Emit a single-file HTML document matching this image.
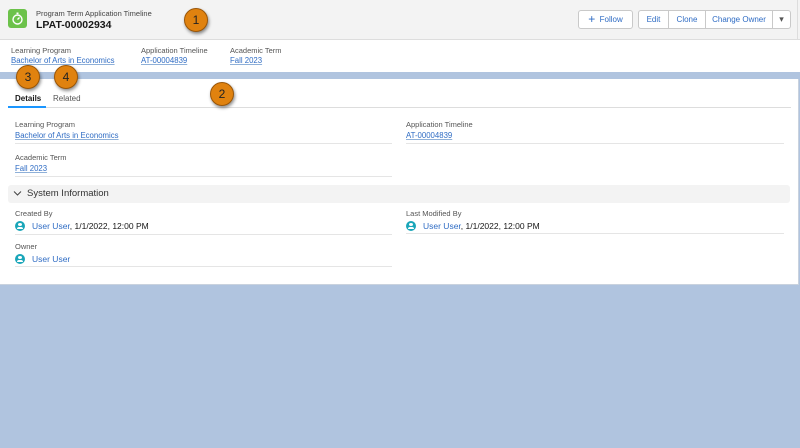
<!DOCTYPE html>
<html><head><meta charset="utf-8"><style>
*{box-sizing:border-box;margin:0;padding:0}
body{width:800px;height:448px;background:#b0c4df;font-family:"Liberation Sans",sans-serif;position:relative;overflow:hidden;color:#181818}
.a{position:absolute}
.lbl{font-size:7.5px;color:#555}
.lnk{font-size:7.8px;color:#2f6cc4;text-decoration:underline;text-decoration-color:#8fb0d8}
.blu{color:#2f6cc4}
.line{position:absolute;height:1px;background:#e5e5e5}
.badge{position:absolute;width:24px;height:24px;border-radius:50%;background:#e0820f;border:1px solid #9a5608;box-shadow:1px 2px 3px rgba(0,0,0,.45);font-size:12px;color:#222;text-align:center;line-height:22px}
.btn{position:absolute;top:10px;height:19px;border:1px solid #c9c9c9;background:#fff;font-size:8px;color:#2f6cc4;text-align:center;line-height:17px}
.av{display:inline-block;width:10px;height:10px;border-radius:50%;background:#1aa6b9;vertical-align:-2px;margin-right:7px;position:relative}
.av:after{content:"";position:absolute;left:3px;top:2px;width:4px;height:3px;border-radius:50%;background:#fff}
.av:before{content:"";position:absolute;left:2px;top:5.5px;width:6px;height:2.5px;border-radius:3px 3px 0 0;background:#fff}
</style></head><body>
<div class="a" style="left:0;top:0;width:800px;height:40px;background:#f3f3f3;border-bottom:1px solid #ddd"></div>
<div class="a" style="left:0;top:40px;width:800px;height:32px;background:#fff"></div>
<div class="a" style="left:0;top:79px;width:799px;height:206px;background:#fff;border-bottom:1px solid #c9d2de;border-right:1px solid #c9d2de"></div>
<div class="a" style="left:797px;top:0;width:1px;height:40px;background:#ddd"></div>

<div class="a" style="left:8px;top:9px;width:19px;height:19px;background:#6cc24a;border-radius:3px">
<svg width="19" height="19" viewBox="0 0 19 19"><circle cx="9.5" cy="10.5" r="4.5" fill="none" stroke="#fff" stroke-width="1.4"/><rect x="8.5" y="3.5" width="2" height="1.6" fill="#fff"/><path d="M9.5 10.5 L11.5 8.5" stroke="#fff" stroke-width="1.3"/></svg></div>
<div class="a" style="left:36px;top:9px;font-size:7.5px;color:#444">Program Term Application Timeline</div>
<div class="a" style="left:36px;top:19px;font-size:10.5px;font-weight:bold">LPAT-00002934</div>

<div class="btn" style="left:578px;width:55px;border-radius:3px"><span style="font-size:12px;vertical-align:-1px">+</span>&nbsp; Follow</div>
<div class="btn" style="left:638px;width:31px;border-radius:3px 0 0 3px">Edit</div>
<div class="btn" style="left:668px;width:38px">Clone</div>
<div class="btn" style="left:705px;width:68px">Change Owner</div>
<div class="btn" style="left:772px;width:19px;border-radius:0 3px 3px 0;color:#555;font-size:9px">▾</div>

<div class="a lbl" style="left:11px;top:46px">Learning Program</div>
<div class="a lnk" style="left:11px;top:56px">Bachelor of Arts in Economics</div>
<div class="a lbl" style="left:141px;top:46px">Application Timeline</div>
<div class="a lnk" style="left:141px;top:56px">AT-00004839</div>
<div class="a lbl" style="left:230px;top:46px">Academic Term</div>
<div class="a lnk" style="left:230px;top:56px">Fall 2023</div>

<div class="a" style="left:15px;top:94px;font-size:8px;font-weight:bold">Details</div>
<div class="a" style="left:53px;top:94px;font-size:8px;color:#555">Related</div>
<div class="line" style="left:8px;top:107px;width:783px;background:#ddd"></div>
<div class="a" style="left:8px;top:106px;width:38px;height:2px;background:#1b96ff"></div>

<div class="a lbl" style="left:15px;top:120px">Learning Program</div>
<div class="a lnk" style="left:15px;top:131px">Bachelor of Arts in Economics</div>
<div class="line" style="left:15px;top:143px;width:377px"></div>
<div class="a lbl" style="left:406px;top:120px">Application Timeline</div>
<div class="a lnk" style="left:406px;top:131px">AT-00004839</div>
<div class="line" style="left:406px;top:143px;width:378px"></div>
<div class="a lbl" style="left:15px;top:153px">Academic Term</div>
<div class="a lnk" style="left:15px;top:164px">Fall 2023</div>
<div class="line" style="left:15px;top:176px;width:377px"></div>

<div class="a" style="left:8px;top:185px;width:782px;height:18px;background:#f3f3f3;border-radius:3px"></div>
<svg class="a" style="left:13px;top:190px" width="9" height="7" viewBox="0 0 9 7"><path d="M1 1.5 L4.5 5 L8 1.5" fill="none" stroke="#444" stroke-width="1"/></svg>
<div class="a" style="left:27px;top:188px;font-size:9.5px;color:#333">System Information</div>

<div class="a lbl" style="left:15px;top:209px">Created By</div>
<div class="a" style="left:15px;top:221px;font-size:8.5px"><span class="av"></span><span class="blu">User User</span>, 1/1/2022, 12:00 PM</div>
<div class="line" style="left:15px;top:234px;width:377px"></div>
<div class="a lbl" style="left:406px;top:209px">Last Modified By</div>
<div class="a" style="left:406px;top:221px;font-size:8.5px"><span class="av"></span><span class="blu">User User</span>, 1/1/2022, 12:00 PM</div>
<div class="line" style="left:406px;top:233px;width:378px"></div>
<div class="a lbl" style="left:15px;top:242px">Owner</div>
<div class="a" style="left:15px;top:254px;font-size:8.5px"><span class="av"></span><span class="blu">User User</span></div>
<div class="line" style="left:15px;top:266px;width:377px"></div>

<div class="badge" style="left:184px;top:8px">1</div>
<div class="badge" style="left:210px;top:82px">2</div>
<div class="badge" style="left:16px;top:65px">3</div>
<div class="badge" style="left:54px;top:65px">4</div>
</body></html>
